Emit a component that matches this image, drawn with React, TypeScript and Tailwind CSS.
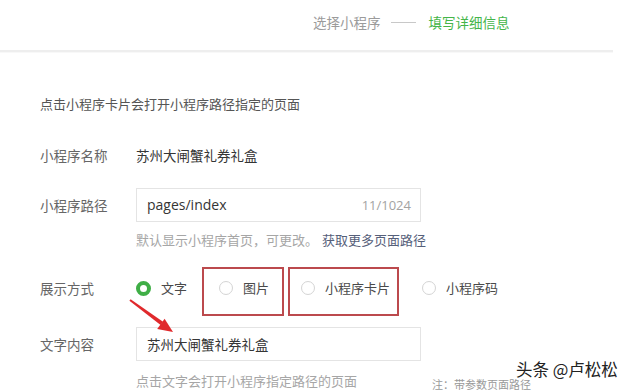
import React from "react";

const options = [
  { label: "文字", checked: true },
  { label: "图片", checked: false },
  { label: "小程序卡片", checked: false },
  { label: "小程序码", checked: false },
];

function Radio({ checked }: { checked: boolean }) {
  return checked ? (
    <span className="w-[15px] h-[15px] rounded-full border-[4px] border-[#3fae46] bg-white shrink-0" />
  ) : (
    <span className="w-[14px] h-[14px] rounded-full border border-[#d4d4d4] bg-white shrink-0" />
  );
}

export default function App() {
  return (
    <div className="relative w-[630px] h-[392px] overflow-hidden bg-white font-['Noto_Sans_CJK_SC',sans-serif] leading-[20px]">
      {/* steps */}
      <div className="h-[50px] pt-[12px] pl-[313px] flex items-start text-[13.5px]">
        <span className="text-[#9b9b9b]">选择小程序</span>
        <span className="mt-[10px] ml-[10px] w-[25px] h-px bg-[#c8c8c8]" />
        <span className="ml-[13px] text-[#44b549]">填写详细信息</span>
      </div>
      <div className="w-[613px] h-[2px] bg-[#eeeeee]" />
      <div className="w-[613px] h-px bg-[#f8f8f8]" />

      <div className="pl-[40px]">
        <p className="mt-[41px] text-[13px] text-[#555]">点击小程序卡片会打开小程序路径指定的页面</p>

        <div className="mt-[31px] flex items-center text-[13.5px]">
          <span className="w-[96px] text-[#666]">小程序名称</span>
          <span className="text-[#353535]">苏州大闸蟹礼券礼盒</span>
        </div>

        <div className="mt-[23px] flex items-center text-[13.5px]">
          <span className="w-[96px] text-[#666]">小程序路径</span>
          <div className="w-[285px] h-[34px] border border-[#e4e4e4] flex items-center justify-between pl-[10px] pr-[9px]">
            <span className="text-[#353535] font-['Open_Sans',sans-serif] text-[14px]">pages/index</span>
            <span className="text-[#a3a3a3] font-['Open_Sans',sans-serif] text-[13px]">11/1024</span>
          </div>
        </div>
        <p className="mt-[8px] ml-[96px] text-[13px] text-[#a6a6a6]">
          默认显示小程序首页，可更改。
          <span className="ml-[4px] text-[#56607a]">获取更多页面路径</span>
        </p>

        <div className="mt-[28px] flex items-center text-[13.5px]">
          <span className="w-[96px] text-[#666]">展示方式</span>
          {options.map((o, i) => (
            <label key={o.label} className={`flex items-center ${i === 0 ? "" : "ml-[32px]"}`}>
              <Radio checked={o.checked} />
              <span className="ml-[10px] text-[#4a4a4a] text-[13px]">{o.label}</span>
            </label>
          ))}
        </div>

        <div className="mt-[29px] flex items-center text-[13.5px]">
          <span className="w-[96px] text-[#666]">文字内容</span>
          <div className="w-[285px] h-[34px] border border-[#e4e4e4] flex items-center pl-[10px]">
            <span className="text-[#353535]">苏州大闸蟹礼券礼盒</span>
          </div>
        </div>
        <p className="mt-[10px] ml-[96px] text-[13px] text-[#a6a6a6]">点击文字会打开小程序指定路径的页面</p>
      </div>

      {/* annotations */}
      <div className="absolute left-[202px] top-[267px] w-[82px] h-[49px] border-2 border-[#bc4a4d]" />
      <div className="absolute left-[288px] top-[267px] w-[111px] h-[49px] border-2 border-[#bc4a4d]" />
      <svg className="absolute left-0 top-0 pointer-events-none" width="630" height="392">
        <polygon points="129.4,300.8 130.6,299.2 163,321.8 160.6,325.0" fill="#e0292c" />
        <polygon points="173,332 157.2,328.9 164.6,318.8" fill="#e0292c" />
      </svg>

      <span className="absolute left-[516px] top-[360px] text-[16.5px] leading-[19px] text-[#222] [text-shadow:0_0_2px_#fff]">
        头条 @卢松松
      </span>
      <span className="absolute left-[432px] top-[378px] text-[11px] leading-[13px] text-[#999]">注：带参数页面路径</span>
    </div>
  );
}
